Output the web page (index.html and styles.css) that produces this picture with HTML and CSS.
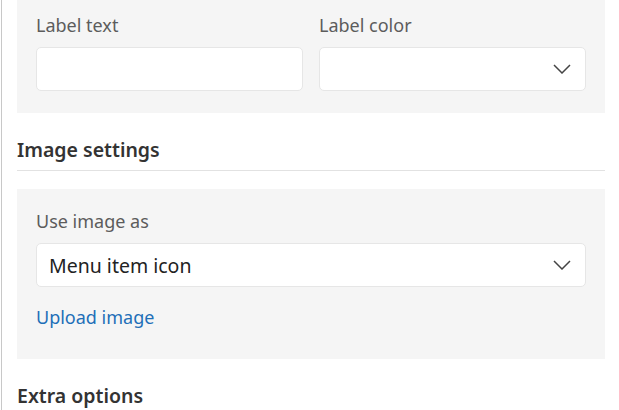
FILE: index.html
```html
<!DOCTYPE html>
<html lang="en">
<head>
  <meta charset="UTF-8">
  <meta name="viewport" content="width=device-width, initial-scale=1.0">
  <title>Menu item settings</title>
  <link rel="stylesheet" href="styles.css">
</head>
<body>
  <div class="sidebar">
    <!-- Label fields -->
    <div class="panel panel-top">
      <div class="row">
        <div class="field">
          <label class="label" for="label-text">Label text</label>
          <input class="input" id="label-text" type="text">
        </div>
        <div class="field">
          <label class="label" for="label-color">Label color</label>
          <div class="select" id="label-color">
            <span class="select-value"></span>
            <svg class="chevron" viewBox="0 0 18 10" width="18" height="10"><path d="M1 1l8 8 8-8"/></svg>
          </div>
        </div>
      </div>
    </div>

    <h3 class="section-title">Image settings</h3>

    <div class="panel">
      <label class="label" for="image-use">Use image as</label>
      <div class="select" id="image-use">
        <span class="select-value">Menu item icon</span>
        <svg class="chevron" viewBox="0 0 18 10" width="18" height="10"><path d="M1 1l8 8 8-8"/></svg>
      </div>
      <a class="link" href="#">Upload image</a>
    </div>

    <h3 class="section-title">Extra options</h3>
  </div>
</body>
</html>
```

FILE: styles.css
```css
body {
  margin: 0;
  font-family: "Noto Sans", "Segoe UI", sans-serif;
  font-size: 18px;
  color: #333;
  background: #fff;
}

.sidebar {
  margin-left: 1px;
  padding: 0 14px 0 15px;
  border-left: 1px solid #c8c8c8;
  min-height: 410px;
  box-sizing: border-box;
}

.panel {
  background: #f5f5f5;
  padding: 20px 19px 30px;
}

.panel-top {
  padding-top: 13px;
  padding-bottom: 22px;
}

.row {
  display: flex;
  gap: 16px;
}

.field {
  flex: 1;
}

.label {
  display: block;
  line-height: 24px;
  margin-bottom: 10px;
  color: #5c5c5c;
}

.input,
.select {
  display: flex;
  align-items: center;
  width: 100%;
  height: 44px;
  box-sizing: border-box;
  border: 1px solid #e6e6e6;
  border-radius: 5px;
  background: #fff;
  font: inherit;
  padding: 0 14px 0 12px;
}

.select-value {
  flex: 1;
  color: #222;
  font-size: 19.5px;
}

.chevron {
  fill: none;
  stroke: #444;
  stroke-width: 1.5;
}

.link {
  display: block;
  margin-top: 18px;
  line-height: 24px;
  color: #1e6fb8;
  text-decoration: none;
}

.section-title {
  margin: 23px 0 18px;
  padding-bottom: 6px;
  border-bottom: 1px solid #e2e2e2;
  font-size: 19.5px;
  font-weight: 600;
  line-height: 28px;
  color: #333;
}
```
